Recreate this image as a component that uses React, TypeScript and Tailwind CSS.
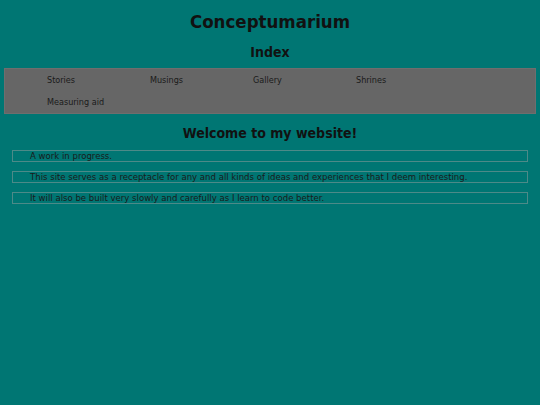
export default function App() {
  const links = ["Stories", "Musings", "Gallery", "Shrines", "Measuring aid"];
  const notes = [
    "A work in progress.",
    "This site serves as a receptacle for any and all kinds of ideas and experiences that I deem interesting.",
    "It will also be built very slowly and carefully as I learn to code better.",
  ];

  return (
    <div
      className="min-h-[405px] bg-[#007673] text-[#111] pt-[10px] px-[4px]"
      style={{ fontFamily: '"DejaVu Sans Condensed", "DejaVu Sans", Verdana, sans-serif' }}
    >
      <h1 className="text-center text-[18.5px] font-bold leading-[24px]">Conceptumarium</h1>
      <h2 className="mt-[9px] text-center text-[14px] font-bold leading-[18px]">Index</h2>

      <nav className="mt-[7px] bg-[#666666] border border-[#6e6e6e] pl-[42px] flex flex-wrap text-[9px] text-[#1a1a1a]">
        {links.map((l) => (
          <a key={l} className="w-[103px] leading-[22px]">
            {l}
          </a>
        ))}
      </nav>

      <h2 className="mt-[10px] text-center text-[14px] font-bold leading-[18px]">Welcome to my website!</h2>

      <div className="mt-[8px] px-[8px] flex flex-col gap-[9px]">
        {notes.map((n) => (
          <p key={n} className="border border-[#4d8a88] h-[12px] pl-[17px] text-[9.5px] leading-[10px] text-[#1a1a1a]">
            {n}
          </p>
        ))}
      </div>
    </div>
  );
}
